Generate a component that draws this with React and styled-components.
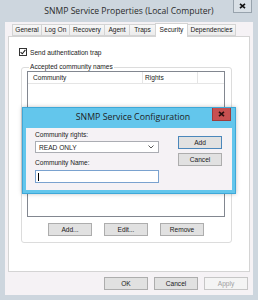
import React from 'react';
import styled, { createGlobalStyle } from 'styled-components';

const Global = createGlobalStyle`
  html, body { margin: 0; padding: 0; background: #cdd6de; }
  body { font-family: "Liberation Sans", Arial, sans-serif; color: #1a1a1a; }
  * { box-sizing: border-box; }
`;

const Window = styled.div`
  position: relative;
  width: 258px;
  height: 300px;
  background: #cdd6de;
  display: flex;
  flex-direction: column;
  overflow: hidden;
`;

const TitleBar = styled.div`
  height: 22px;
  flex: none;
  display: grid;
  grid-template-columns: 1fr auto 1fr;
  align-items: start;
`;

const TitleText = styled.div`
  grid-column: 2;
  font-family: "Open Sans", "Liberation Sans", sans-serif;
  font-size: 8.6px;
  line-height: 22px;
  color: #2b2b2b;
  white-space: nowrap;
`;

const CaptionClose = styled.div`
  grid-column: 3;
  justify-self: end;
  margin-right: 6px;
  width: 19px;
  height: 13px;
  border: 1px solid ${p => (p.$red ? '#9e3b3b' : '#98a3ad')};
  border-top: none;
  background: ${p => (p.$red ? '#c75050' : '#d9e0e6')};
  display: flex;
  align-items: center;
  justify-content: center;
`;

const Body = styled.div`
  flex: 1;
  margin: 0 5px 5px;
  background: #f5f2f5;
  display: flex;
  flex-direction: column;
  padding: 1px 3px 0;
`;

const TabStrip = styled.div`
  display: flex;
  align-items: flex-end;
  height: 13px;
  margin-left: 4px;
  position: relative;
  z-index: 1;
`;

const Tab = styled.div`
  width: ${p => p.$w}px;
  height: ${p => (p.$active ? 14 : 12)}px;
  margin-bottom: ${p => (p.$active ? -1 : 0)}px;
  margin-left: -1px;
  border: 1px solid #d4d4d4;
  border-bottom: ${p => (p.$active ? 'none' : '1px solid #d4d4d4')};
  background: ${p => (p.$active ? '#ffffff' : 'linear-gradient(#f7f7f7, #ececec)')};
  font-size: 6.6px;
  line-height: ${p => (p.$active ? 11 : 10)}px;
  text-align: center;
  white-space: nowrap;
  overflow: hidden;
  color: #1a1a1a;
  &:first-child { margin-left: 0; }
`;

const Panel = styled.div`
  flex: none;
  height: 236px;
  border: 1px solid #d4d4d4;
  background: #ffffff;
  padding: 10px 0 0 10px;
  display: flex;
  flex-direction: column;
`;

const CheckRow = styled.label`
  display: flex;
  align-items: center;
  height: 10px;
  font-size: 6.6px;
  gap: 3px;
`;

const CheckBox = styled.span`
  width: 8px;
  height: 8px;
  border: 1px solid #333333;
  background: #ffffff;
  display: flex;
  align-items: center;
  justify-content: center;
`;

const Group = styled.fieldset`
  margin: 6px 0 0 2px;
  width: 211px;
  height: 180px;
  padding: 0 0 0 5px;
  border: 1px solid #dcdcdc;
  border-radius: 3px;
  display: flex;
  flex-direction: column;
`;

const Legend = styled.legend`
  font-size: 6.6px;
  line-height: 8px;
  padding: 0 1px;
  margin-left: 2px;
  color: #1a1a1a;
`;

const ListView = styled.div`
  width: 198px;
  height: 146px;
  border: 1px solid #828790;
  background: #ffffff;
`;

const ListHeader = styled.div`
  display: grid;
  grid-template-columns: 115px 55px 1fr;
  height: 12px;
  border-bottom: 1px solid #e5e5e5;
`;

const HeaderCell = styled.div`
  font-size: 6.6px;
  line-height: 11px;
  padding-left: 5px;
  border-right: 1px solid #e5e5e5;
  &:last-child { border-right: none; }
  &:nth-child(2) { padding-left: 2px; }
`;

const ButtonRow = styled.div`
  display: flex;
  gap: ${p => p.$gap}px;
  justify-content: ${p => (p.$end ? 'flex-end' : 'flex-start')};
  padding-left: ${p => p.$pl || 0}px;
  padding-right: ${p => p.$pr || 0}px;
  margin-top: ${p => p.$mt}px;
`;

const Button = styled.div`
  width: 44px;
  height: 13px;
  border: 1px solid ${p => (p.$disabled ? '#c6c6c6' : p.$default ? '#4b87bb' : '#adadad')};
  background: ${p => (p.$disabled ? '#f4f4f4' : '#e1e1e1')};
  color: ${p => (p.$disabled ? '#a0a0a0' : '#1a1a1a')};
  font-size: 6.6px;
  line-height: 11px;
  text-align: center;
`;

const Dialog = styled.div`
  position: absolute;
  left: 22px;
  top: 107px;
  width: 214px;
  height: 87px;
  background: #63c6ec;
  border: 1px solid #3ea8d8;
  display: flex;
  flex-direction: column;
  box-shadow: 0 0 4px rgba(0, 0, 0, 0.25);
`;

const DialogTitleBar = styled(TitleBar)`
  height: 20px;
`;

const DialogTitleText = styled(TitleText)`
  line-height: 19px;
  font-size: 8.8px;
  color: #1e1e1e;
  padding-left: 8px;
`;

const DialogClose = styled(CaptionClose)`
  margin-right: 4px;
`;

const DialogContent = styled.div`
  flex: 1;
  margin: 0 3px 3px;
  background: #f5f2f5;
  display: flex;
  padding: 3px 0 0 9px;
`;

const FieldColumn = styled.div`
  width: 124px;
  display: flex;
  flex-direction: column;
`;

const FieldLabel = styled.div`
  font-size: 6.6px;
  line-height: 8px;
  margin-top: ${p => p.$mt || 0}px;
`;

const Select = styled.div`
  margin-top: 2px;
  height: 12px;
  border: 1px solid #abadb3;
  background: #ffffff;
  display: flex;
  align-items: center;
  justify-content: space-between;
  padding: 0 4px 0 3px;
  font-size: 6.6px;
`;

const TextInput = styled.div`
  margin-top: 3px;
  height: 13px;
  border: 1px solid #7aa2cf;
  background: #ffffff;
  display: flex;
  align-items: center;
  padding-left: 2px;
`;

const Caret = styled.span`
  width: 1px;
  height: 8px;
  background: #000000;
`;

const DialogButtons = styled.div`
  margin-left: 19px;
  padding-top: 5px;
  display: flex;
  flex-direction: column;
  gap: 4px;
`;

const CloseGlyph = ({ color = '#111' }) => (
  <svg width="7" height="6" viewBox="0 0 7 6">
    <path d="M1 0.8 L6 5.2 M6 0.8 L1 5.2" stroke={color} strokeWidth="1.6" />
  </svg>
);

const tabs = [
  ['General', 30],
  ['Log On', 29],
  ['Recovery', 36],
  ['Agent', 26],
  ['Traps', 27],
  ['Security', 33, true],
  ['Dependencies', 49],
];

export default function App() {
  return (
    <>
      <Global />
      <Window>
        <TitleBar>
          <TitleText>SNMP Service Properties (Local Computer)</TitleText>
          <CaptionClose>
            <CloseGlyph />
          </CaptionClose>
        </TitleBar>
        <Body>
          <TabStrip>
            {tabs.map(([name, w, active]) => (
              <Tab key={name} $w={w} $active={active}>
                {name}
              </Tab>
            ))}
          </TabStrip>
          <Panel>
            <CheckRow>
              <CheckBox>
                <svg width="6" height="6" viewBox="0 0 6 6">
                  <path d="M0.6 3.1 L2.3 4.8 L5.4 0.9" fill="none" stroke="#222" strokeWidth="1.1" />
                </svg>
              </CheckBox>
              Send authentication trap
            </CheckRow>
            <Group>
              <Legend>Accepted community names</Legend>
              <ListView>
                <ListHeader>
                  <HeaderCell>Community</HeaderCell>
                  <HeaderCell>Rights</HeaderCell>
                  <HeaderCell />
                </ListHeader>
              </ListView>
              <ButtonRow $gap={12} $pl={21} $mt={6}>
                <Button>Add...</Button>
                <Button>Edit...</Button>
                <Button>Remove</Button>
              </ButtonRow>
            </Group>
          </Panel>
          <ButtonRow $gap={6} $end $pr={2} $mt={5}>
            <Button>OK</Button>
            <Button>Cancel</Button>
            <Button $disabled>Apply</Button>
          </ButtonRow>
        </Body>

        <Dialog>
          <DialogTitleBar>
            <DialogTitleText>SNMP Service Configuration</DialogTitleText>
            <DialogClose $red>
              <CloseGlyph color="#2a1010" />
            </DialogClose>
          </DialogTitleBar>
          <DialogContent>
            <FieldColumn>
              <FieldLabel>Community rights:</FieldLabel>
              <Select>
                READ ONLY
                <svg width="6" height="4" viewBox="0 0 6 4">
                  <path d="M0.5 0.5 L3 3 L5.5 0.5" fill="none" stroke="#444" strokeWidth="0.9" />
                </svg>
              </Select>
              <FieldLabel $mt={6}>Community Name:</FieldLabel>
              <TextInput>
                <Caret />
              </TextInput>
            </FieldColumn>
            <DialogButtons>
              <Button $default>Add</Button>
              <Button>Cancel</Button>
            </DialogButtons>
          </DialogContent>
        </Dialog>
      </Window>
    </>
  );
}
